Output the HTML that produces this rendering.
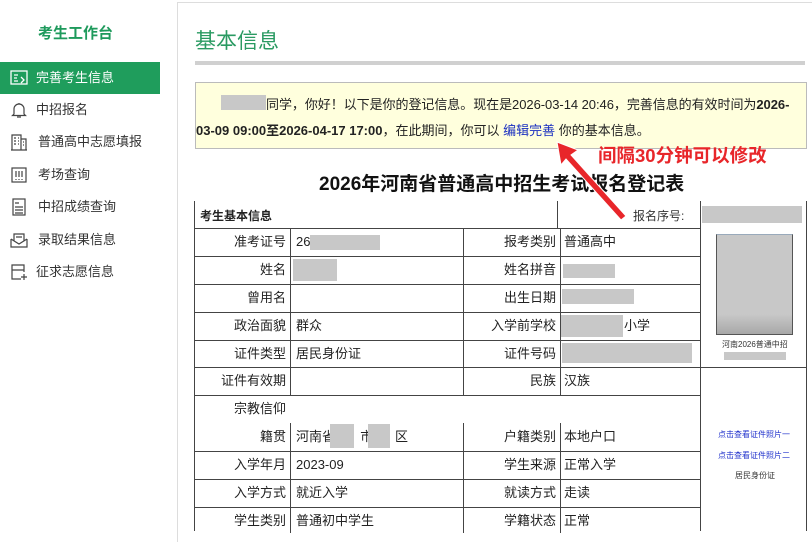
<!DOCTYPE html>
<html><head><meta charset="utf-8">
<style>
*{margin:0;padding:0;box-sizing:border-box}
body{width:812px;height:529px;overflow:hidden;background:#fff;font-family:"Liberation Sans","Noto Sans CJK SC",sans-serif;font-size:13px;color:#222;position:relative}
.a{position:absolute;white-space:nowrap}
.side .it{position:absolute;left:0;width:160px;height:32px;line-height:32px;font-size:13px;color:#333}
.side .it svg{position:absolute;left:10px;top:7px}
.side .it span{position:absolute;left:36px}
.g{background:#c8c8c8;position:absolute}
.hl{position:absolute;height:1px;background:#444}
.vl{position:absolute;width:1px;background:#444}
.lb{position:absolute;text-align:right;width:90px;font-size:13px;line-height:28px}
.v{position:absolute;font-size:13px;line-height:28px}
</style></head><body>
<div class="side">
<div class="a" style="left:38px;top:22px;font-size:15px;font-weight:bold;color:#1e9a5c">考生工作台</div>
<div class="it" style="top:62px;background:#1f9d5c;color:#fff"><svg width="18" height="18" viewBox="0 0 18 18" fill="none" stroke="#fff" stroke-width="1.3"><rect x="1" y="2" width="16" height="13"/><path d="M4 6h4M4 9h3M4 12h4M11 8l3 3-3 3"/></svg><span>完善考生信息</span></div>
<div class="it" style="top:94px"><svg width="18" height="18" viewBox="0 0 18 18" fill="none" stroke="#444" stroke-width="1.2"><path d="M4 13V8a5 5 0 0110 0v5l1.5 1.5h-13zM7 16h4M9 2v1"/></svg><span>中招报名</span></div>
<div class="it" style="top:126px"><svg width="18" height="18" viewBox="0 0 18 18" fill="none" stroke="#444" stroke-width="1.2"><path d="M2 17V2h9v15M11 6h5v11M1 17h16M4 5h2M4 8h2M4 11h2M8 5h1M8 8h1M8 11h1M13 9h1M13 12h1"/></svg><span style="left:38px">普通高中志愿填报</span></div>
<div class="it" style="top:159px"><svg width="18" height="18" viewBox="0 0 18 18" fill="none" stroke="#444" stroke-width="1.2"><rect x="2" y="2" width="14" height="14"/><path d="M6 5v6M9 5v6M12 5v6M6 13v1M9 13v1M12 13v1"/></svg><span style="left:38px">考场查询</span></div>
<div class="it" style="top:191px"><svg width="18" height="18" viewBox="0 0 18 18" fill="none" stroke="#444" stroke-width="1.2"><rect x="3" y="1" width="12" height="16"/><path d="M5 5h4M5 9h8M5 12h8M5 15h8"/></svg><span style="left:38px">中招成绩查询</span></div>
<div class="it" style="top:224px"><svg width="18" height="18" viewBox="0 0 18 18" fill="none" stroke="#444" stroke-width="1.2"><path d="M1 8v8h16V8M1 8l8 5 8-5M4 10V3h10v7M6 6h6"/></svg><span style="left:38px">录取结果信息</span></div>
<div class="it" style="top:256px"><svg width="18" height="18" viewBox="0 0 18 18" fill="none" stroke="#444" stroke-width="1.2"><path d="M11 16H2V2h12v7M2 7h12M14 11v6M11 14h6"/></svg><span>征求志愿信息</span></div>
</div>
<div style="position:absolute;left:177px;top:2px;width:640px;height:540px;border-left:1px solid #ddd;border-top:1px solid #ddd"></div>
<div class="a" style="left:195px;top:25px;font-size:21px;color:#2a9a62">基本信息</div>
<div style="position:absolute;left:195px;top:61px;width:610px;height:4px;background:#d0d0d0"></div>
<div style="position:absolute;left:195px;top:82px;width:612px;height:67px;background:#ffffdd;border:1px solid #bbb"></div>
<div class="g" style="left:221px;top:95px;width:45px;height:15px"></div>
<div class="a" style="left:266px;top:94px;font-size:13px;letter-spacing:-0.05px">同学，你好！以下是你的登记信息。现在是2026-03-14 20:46，完善信息的有效时间为<b>2026-</b></div>
<div class="a" style="left:196px;top:120px;font-size:13px"><b>03-09 09:00至2026-04-17 17:00</b>，在此期间，你可以 <span style="color:#1a2fc0">编辑完善</span> 你的基本信息。</div>
<div class="a" style="left:598px;top:142px;font-size:18.5px;font-weight:bold;color:#e8262a">间隔30分钟可以修改</div>
<div class="a" style="left:319px;top:169px;font-size:19px;font-weight:bold;color:#111">2026年河南省普通高中招生考试报名登记表</div>
<div class="vl" style="left:194px;top:201px;height:330px"></div>
<div class="vl" style="left:557px;top:201px;height:27px"></div>
<div class="vl" style="left:700px;top:201px;height:330px"></div>
<div class="vl" style="left:806px;top:201px;height:330px"></div>
<div class="vl" style="left:290px;top:228px;height:167px"></div>
<div class="vl" style="left:290px;top:423px;height:110px"></div>
<div class="vl" style="left:463px;top:228px;height:167px"></div>
<div class="vl" style="left:463px;top:423px;height:110px"></div>
<div class="vl" style="left:560px;top:228px;height:167px"></div>
<div class="vl" style="left:560px;top:423px;height:110px"></div>
<div class="hl" style="left:194px;top:228px;width:506px"></div>
<div class="hl" style="left:194px;top:256px;width:506px"></div>
<div class="hl" style="left:194px;top:284px;width:506px"></div>
<div class="hl" style="left:194px;top:312px;width:506px"></div>
<div class="hl" style="left:194px;top:340px;width:506px"></div>
<div class="hl" style="left:194px;top:367px;width:612px"></div>
<div class="hl" style="left:194px;top:395px;width:506px"></div>
<div class="hl" style="left:194px;top:451px;width:506px"></div>
<div class="hl" style="left:194px;top:479px;width:506px"></div>
<div class="hl" style="left:194px;top:507px;width:506px"></div>
<div class="a" style="left:200px;top:207px;font-weight:bold;font-size:12px">考生基本信息</div>
<div class="a" style="left:633px;top:207px;font-size:12px;color:#333">报名序号:</div>
<div class="g" style="left:702px;top:206px;width:100px;height:17px"></div>
<div class="lb" style="left:196px;top:228px">准考证号</div><div class="v" style="left:296px;top:228px">26</div><div class="g" style="left:310px;top:235px;width:70px;height:15px"></div>
<div class="lb" style="left:466px;top:228px">报考类别</div><div class="v" style="left:564px;top:228px">普通高中</div>
<div class="lb" style="left:196px;top:256px">姓名</div><div class="g" style="left:293px;top:259px;width:44px;height:22px"></div>
<div class="lb" style="left:466px;top:256px">姓名拼音</div><div class="g" style="left:563px;top:264px;width:52px;height:14px"></div>
<div class="lb" style="left:196px;top:284px">曾用名</div>
<div class="lb" style="left:466px;top:284px">出生日期</div><div class="g" style="left:562px;top:289px;width:72px;height:15px"></div>
<div class="lb" style="left:196px;top:312px">政治面貌</div><div class="v" style="left:296px;top:312px">群众</div>
<div class="lb" style="left:466px;top:312px">入学前学校</div><div class="g" style="left:561px;top:315px;width:62px;height:22px"></div><div class="v" style="left:624px;top:312px">小学</div>
<div class="lb" style="left:196px;top:340px">证件类型</div><div class="v" style="left:296px;top:340px">居民身份证</div>
<div class="lb" style="left:466px;top:340px">证件号码</div><div class="g" style="left:562px;top:343px;width:130px;height:20px"></div>
<div class="lb" style="left:196px;top:367px">证件有效期</div>
<div class="lb" style="left:466px;top:367px">民族</div><div class="v" style="left:564px;top:367px">汉族</div>
<div class="lb" style="left:196px;top:395px">宗教信仰</div>
<div class="lb" style="left:196px;top:423px">籍贯</div><div class="v" style="left:296px;top:423px">河南省&nbsp;&nbsp;&nbsp;&nbsp;&nbsp;&nbsp;&nbsp;市&nbsp;&nbsp;&nbsp;&nbsp;&nbsp;&nbsp;区</div>
<div class="g" style="left:330px;top:424px;width:24px;height:24px"></div><div class="g" style="left:368px;top:424px;width:22px;height:24px"></div>
<div class="lb" style="left:466px;top:423px">户籍类别</div><div class="v" style="left:564px;top:423px">本地户口</div>
<div class="lb" style="left:196px;top:451px">入学年月</div><div class="v" style="left:296px;top:451px">2023-09</div>
<div class="lb" style="left:466px;top:451px">学生来源</div><div class="v" style="left:564px;top:451px">正常入学</div>
<div class="lb" style="left:196px;top:479px">入学方式</div><div class="v" style="left:296px;top:479px">就近入学</div>
<div class="lb" style="left:466px;top:479px">就读方式</div><div class="v" style="left:564px;top:479px">走读</div>
<div class="lb" style="left:196px;top:507px">学生类别</div><div class="v" style="left:296px;top:507px">普通初中学生</div>
<div class="lb" style="left:466px;top:507px">学籍状态</div><div class="v" style="left:564px;top:507px">正常</div>
<div style="position:absolute;left:716px;top:234px;width:77px;height:101px;background:linear-gradient(#c8c8c8 80%,#a8a8a8);border:1px solid #555;border-top-color:#9ab"></div>
<div class="a" style="left:722px;top:339px;font-size:8px;color:#333">河南2026普通中招</div>
<div class="g" style="left:724px;top:352px;width:62px;height:8px"></div>
<div class="a" style="left:718px;top:429px;font-size:8px;color:#2233cc">点击查看证件照片一</div>
<div class="a" style="left:718px;top:450px;font-size:8px;color:#2233cc">点击查看证件照片二</div>
<div class="a" style="left:735px;top:470px;font-size:8px;color:#333">居民身份证</div>
<svg style="position:absolute;left:0;top:0" width="812" height="529"><path d="M557 142 L578 150 L571 155 L626 216 L621 220 L566 159 L561 165 Z" fill="#e8262a" stroke="#fff" stroke-width="1"/></svg>
</body></html>
